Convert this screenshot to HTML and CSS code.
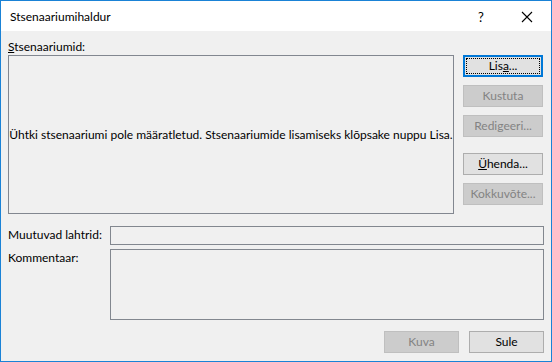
FILE: index.html
```html
<!DOCTYPE html>
<html>
	<head>
		<title>Stsenaariumihaldur</title>
		<link rel="stylesheet" href="styles.css">
	</head>
	<body>
		<div class="window">
			<div class="titlebar">
				<span class="title">Stsenaariumihaldur</span>
				<span class="help">?</span>
				<svg class="close" width="12" height="12" viewBox="0 0 12 12">
					<path d="M1 1 L11 11 M11 1 L1 11" stroke="#000" stroke-width="1.1" fill="none"/>
				</svg>
			</div>

			<div class="content">
				<div class="list-label"><u>S</u>tsenaariumid:</div>

				<div class="main">
					<div class="list-box">
						<span>Ühtki stsenaariumi pole määratletud. Stsenaariumide lisamiseks klõpsake nuppu Lisa.</span>
					</div>
					<div class="side-buttons">
						<button class="btn focus"><span class="focus-ring">Lis<u>a</u>...</span></button>
						<button class="btn" disabled>Kustuta</button>
						<button class="btn" disabled>Redigeeri...</button>
						<button class="btn gap-top"><u>Ü</u>henda...</button>
						<button class="btn" disabled>Kokkuvõte...</button>
					</div>
				</div>

				<div class="field-row first-row">
					<label class="field-label">Muutuvad lahtrid:</label>
					<div class="field input"></div>
				</div>
				<div class="field-row">
					<label class="field-label">Kommentaar:</label>
					<div class="field textarea"></div>
				</div>

				<div class="footer">
					<button class="btn wide" disabled>Kuva</button>
					<button class="btn wide">Sule</button>
				</div>
			</div>
		</div>
	</body>
</html>
```

FILE: styles.css
```css
body {
	margin: 0;
	font-family: Lato, "Noto Sans", sans-serif;
	font-size: 12px;
	color: #000;
	background: #fff;
}

.window {
	width: 552px;
	height: 362px;
	box-sizing: border-box;
	border: 1px solid #1a82d6;
	display: flex;
	flex-direction: column;
	background: #f0f0f0;
}

.titlebar {
	height: 30px;
	background: #fff;
	display: flex;
	align-items: center;
	padding-left: 9px;
	flex-shrink: 0;
}

.title {
	flex: 1;
	font-size: 12px;
	padding-top: 1px;
}

.help {
	font-size: 13px;
	width: 12px;
	margin-right: 31px;
	padding-top: 1px;
}

.close {
	margin-right: 18px;
	margin-top: 1px;
}

.content {
	padding: 0 7px 0 7px;
	display: flex;
	flex-direction: column;
}

.list-label {
	height: 16px;
	padding-top: 8px;
	line-height: 16px;
}

.main {
	display: flex;
	gap: 9px;
	height: 159px;
}

.list-box {
	width: 446px;
	box-sizing: border-box;
	border: 1px solid #828790;
	display: flex;
	align-items: center;
	justify-content: center;
	padding-bottom: 1px;
	white-space: nowrap;
}

.side-buttons {
	display: flex;
	flex-direction: column;
	gap: 8px;
}

.btn {
	width: 80px;
	height: 22px;
	box-sizing: border-box;
	font-family: inherit;
	font-size: 12px;
	color: #000;
	background: #e1e1e1;
	border: 1px solid #adadad;
	padding: 0;
	margin: 0;
	line-height: 18px;
}

.btn:disabled {
	background: #cccccc;
	border-color: #bfbfbf;
	color: #838383;
}

.btn.focus {
	border: 2px solid #0078d7;
	padding: 1px;
	display: flex;
}

.focus-ring {
	flex: 1;
	border: 1px dotted #000;
	line-height: 14px;
}

.gap-top {
	margin-top: 8px;
}

.field-row {
	display: flex;
	margin-top: 4px;
}

.field-row.first-row {
	margin-top: 12px;
}

.field-label {
	width: 102px;
	line-height: 16px;
	padding-top: 1px;
}

.field {
	flex: 1;
	box-sizing: border-box;
	border: 1px solid #82878f;
}

.input {
	height: 19px;
}

.textarea {
	height: 71px;
}

.footer {
	display: flex;
	justify-content: flex-end;
	gap: 10px;
	margin-top: 11px;
}

.btn.wide {
	width: 75px;
}
```
